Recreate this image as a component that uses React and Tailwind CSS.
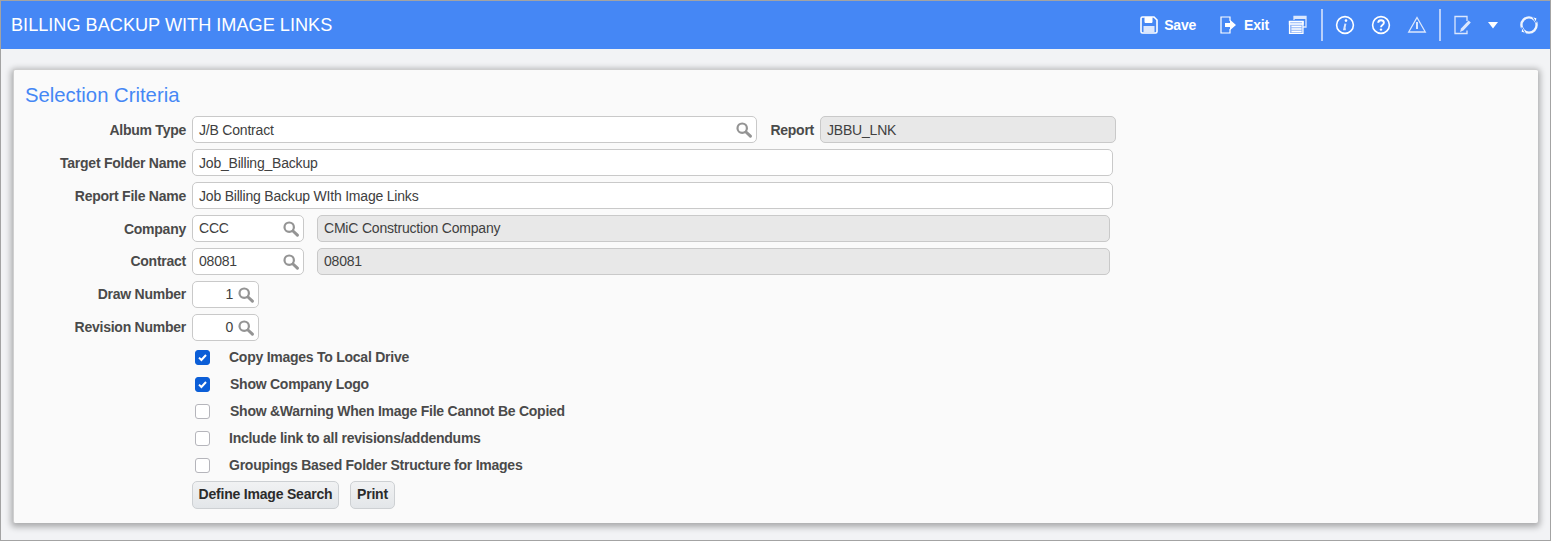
import React from 'react';

const font = { sans: 'font-["Liberation_Sans",Arial,sans-serif]' };

function SearchIcon() {
  return (
    <svg width="16" height="16" viewBox="0 0 16 16" fill="none" stroke="#949494" className="shrink-0">
      <circle cx="6.2" cy="6.2" r="4.7" strokeWidth="2.2" />
      <path d="M10 10l4.4 4.2" strokeWidth="3" strokeLinecap="round" />
    </svg>
  );
}

function Field({ value, width, disabled, search, right, up, className = '' }) {
  return (
    <div
      className={`flex items-center h-[27px] border border-[#c9c9c9] rounded-[5px] pl-[6px] pr-[4px] text-[14px] tracking-[-0.2px] text-[#404040] shrink-0 ${
        disabled ? 'bg-[#e8e8e8]' : 'bg-white'
      } ${className}`}
      style={{ width }}
    >
      <span className={`flex-1 ${up ? '' : 'pt-[2px]'} ${right ? 'text-right pr-[5px]' : ''}`}>{value}</span>
      {search && <SearchIcon />}
    </div>
  );
}

function Row({ label, up, children }) {
  return (
    <div className="flex items-center h-[27px] mb-[6px]">
      <label
        className={`w-[175px] pr-[6px] ${up ? '' : 'pt-[2px]'} text-right text-[14px] tracking-[-0.25px] font-bold text-[#4a4a4a] whitespace-nowrap`}
      >
        {label}
      </label>
      {children}
    </div>
  );
}

function Check({ label, checked, offset = 'ml-[19px]' }) {
  return (
    <div className="flex items-center h-[27px] pl-[178px]">
      <span
        className={`w-[15px] h-[15px] rounded-[3px] border flex items-center justify-center ${
          checked ? 'bg-[#0b5ed7] border-[#0b5ed7]' : 'bg-white border-[#b5b5bb]'
        }`}
      >
        {checked && (
          <svg width="11" height="11" viewBox="0 0 11 11" fill="none" stroke="white" strokeWidth="2">
            <path d="M2 5.6l2.4 2.4L9 3" />
          </svg>
        )}
      </span>
      <span className={`${offset} text-[14px] tracking-[-0.25px] font-bold text-[#4a4a4a] whitespace-nowrap`}>{label}</span>
    </div>
  );
}

function ToolIcon({ children, className = '' }) {
  return (
    <svg width="20" height="20" viewBox="0 0 20 20" fill="none" stroke="white" className={`shrink-0 ${className}`}>
      {children}
    </svg>
  );
}

function Divider({ className = '' }) {
  return <span className={`block w-[2px] h-[32px] bg-[#b8cffa] ${className}`} />;
}

export default function App() {
  return (
    <div className={`h-[541px] border border-[#a3a3a3] bg-[#f2f3f5] flex flex-col overflow-hidden ${font.sans}`}>
      {/* Header */}
      <header className="h-[48px] shrink-0 bg-[#4587f5] flex items-center text-white">
        <h1 className="ml-[10px] text-[18.15px] leading-none">BILLING BACKUP WITH IMAGE LINKS</h1>
        <div className="ml-auto flex items-center">
          <ToolIcon>
            <path d="M2 3.5A1.5 1.5 0 013.5 2H15l3 3v11.5a1.5 1.5 0 01-1.5 1.5h-13A1.5 1.5 0 012 16.5z" strokeWidth="1.6" />
            <path d="M6 2.5h7v5H6z" fill="white" strokeWidth="1" />
            <path d="M4.5 11h11v6.5h-11z" fill="#dbe7fd" stroke="none" />
          </ToolIcon>
          <span className="ml-[5px] text-[14px] tracking-[-0.2px] font-bold">Save</span>
          <ToolIcon className="ml-[22px]">
            <path d="M12 6V2H3v16h9v-4" strokeWidth="1.2" />
            <path d="M7 8h5V4.8L18 10l-6 5.2V12H7z" fill="white" stroke="none" />
          </ToolIcon>
          <span className="ml-[6px] text-[14px] tracking-[-0.2px] font-bold">Exit</span>
          <ToolIcon className="ml-[19px]">
            <path d="M6 5V1.5h12V12h-3" stroke="#dbe7fd" strokeWidth="1.3" />
            <path d="M6 1.5h12v2.5H6z" fill="#dbe7fd" stroke="none" />
            <path d="M1.5 6.5h13.5v12H1.5z" strokeWidth="1.2" fill="#8fb5f9" />
            <path d="M1.5 6.5H15V9H1.5zM3.5 11.5h10M3.5 14h10M3.5 16.5h10" stroke="white" strokeWidth="1.3" />
          </ToolIcon>
          <Divider className="ml-[13px]" />
          <ToolIcon className="ml-[12px]">
            <circle cx="10" cy="10" r="8.4" strokeWidth="1.6" />
            <path d="M10.4 8.6l-1.2 5.6h1.6" stroke="#dbe7fd" strokeWidth="2" />
            <circle cx="11" cy="5.6" r="1.3" fill="white" stroke="none" />
          </ToolIcon>
          <ToolIcon className="ml-[16px]">
            <circle cx="10" cy="10" r="8.4" strokeWidth="1.6" />
            <path d="M7.2 7.8C7.3 6 8.6 5.3 10 5.3c1.7 0 2.9 1 2.9 2.5 0 2.3-2.9 2.2-2.9 4.4" strokeWidth="1.9" />
            <circle cx="10" cy="14.6" r="1.2" fill="white" stroke="none" />
          </ToolIcon>
          <ToolIcon className="ml-[16px]">
            <path d="M10 2.5L18.3 17H1.7z" strokeWidth="1.3" stroke="#dbe7fd" />
            <path d="M10 7v7" strokeWidth="2" stroke="#dbe7fd" />
          </ToolIcon>
          <Divider className="ml-[12px]" />
          <ToolIcon className="ml-[12px]">
            <path d="M14 6V1.5H2v17h12v-3" stroke="#dbe7fd" strokeWidth="1.3" />
            <path d="M7 17l1-3.4L15.6 5.5l2.2 2-7.4 8z" fill="#dbe7fd" stroke="none" />
          </ToolIcon>
          <svg width="12" height="8" viewBox="0 0 12 8" fill="white" className="ml-[14px]">
            <path d="M1 1h10L6 7.5z" />
          </svg>
          <ToolIcon className="ml-[20px] mr-[11px]">
            <circle cx="10" cy="10" r="7.6" strokeWidth="2.4" stroke="#eef4fe" />
            <path d="M13.5 1.5l4.5 1.5-1 4.5zM6.5 18.5L2 17l1-4.5z" fill="white" stroke="#4587f5" strokeWidth="1" />
          </ToolIcon>
        </div>
      </header>

      {/* Selection Criteria */}
      <main className="flex-1 pt-[20px] px-[12px]">
        <section className="h-[454px] bg-[#fafafa] border border-[#cfcfcf] border-b-0 border-r-0 rounded-[2px] pl-[3px] shadow-[0_2px_6px_2px_rgba(0,0,0,0.3)]">
          <h2 className="pl-[8px] pt-[13px] h-[46px] text-[20.3px] leading-[24px] text-[#4587f5]">Selection Criteria</h2>

          <Row label="Album Type">
            <Field value="J/B Contract" width={565} search />
            <span className="w-[63px] pr-[6px] pt-[2px] text-right text-[14px] tracking-[-0.25px] font-bold text-[#4a4a4a]">Report</span>
            <Field value="JBBU_LNK" width={296} disabled />
          </Row>
          <Row label="Target Folder Name">
            <Field value="Job_Billing_Backup" width={921} />
          </Row>
          <Row label="Report File Name">
            <Field value="Job Billing Backup WIth Image Links" width={921} />
          </Row>
          <Row label="Company">
            <Field value="CCC" width={112} search up />
            <Field value="CMiC Construction Company" width={793} disabled up className="ml-[13px]" />
          </Row>
          <Row label="Contract" up>
            <Field value="08081" width={112} search up />
            <Field value="08081" width={793} disabled up className="ml-[13px]" />
          </Row>
          <Row label="Draw Number" up>
            <Field value="1" width={67} search right up />
          </Row>
          <Row label="Revision Number" up>
            <Field value="0" width={67} search right up />
          </Row>

          <div className="mt-[-3px]">
            <Check label="Copy Images To Local Drive" checked />
            <Check label="Show Company Logo" checked offset="ml-[20px]" />
            <Check label="Show &Warning When Image File Cannot Be Copied" offset="ml-[20px]" />
            <Check label="Include link to all revisions/addendums" />
            <Check label="Groupings Based Folder Structure for Images" />
          </div>

          <div className="flex pl-[175px] gap-[11px] mt-[2px]">
            <button className="h-[28px] w-[147px] pb-[2px] rounded-[5px] border border-[#cdd0d3] bg-gradient-to-b from-[#f1f2f3] to-[#e3e6e9] text-[14px] tracking-[-0.2px] font-bold text-[#2b2b2b]">
              Define Image Search
            </button>
            <button className="h-[28px] w-[45px] pb-[2px] rounded-[5px] border border-[#cdd0d3] bg-gradient-to-b from-[#f1f2f3] to-[#e3e6e9] text-[14px] tracking-[-0.2px] font-bold text-[#2b2b2b]">
              Print
            </button>
          </div>
        </section>
      </main>
    </div>
  );
}
